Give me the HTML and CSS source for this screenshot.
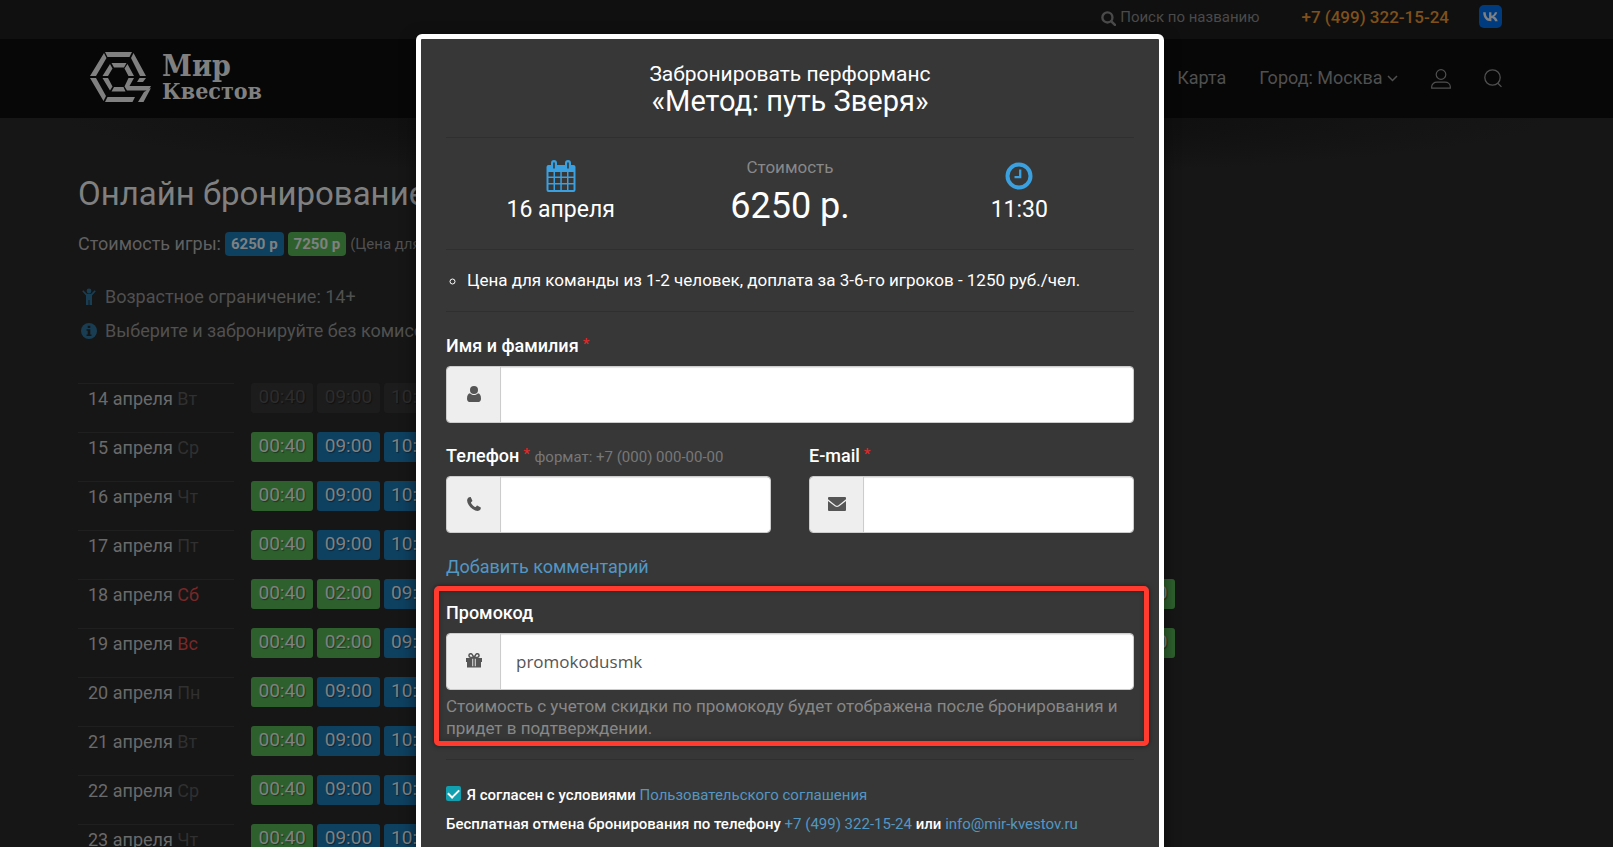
FILE: index.html
```html
<!DOCTYPE html>
<html lang="ru">
<head>
    <meta charset="UTF-8">
    <meta name="viewport" content="width=device-width, initial-scale=1">
    <title>Мир Квестов</title>
    <link rel="stylesheet" href="styles.css">
</head>
<body>
    <div class="page">
        <div class="topbar">
            <div class="container topbar-inner">
                <a class="top-search" href="#">
                    <svg width="15" height="15" viewBox="0 0 14 14"><circle cx="6" cy="6" r="4.7" fill="none" stroke="currentColor" stroke-width="2.2"/><path d="M9.4 9.4L13 13" stroke="currentColor" stroke-width="2.4" stroke-linecap="round"/></svg>
                    Поиск по названию
                </a>
                <a class="top-phone" href="tel:+74993221524">+7 (499) 322-15-24</a>
                <a class="vk" href="#" aria-label="VK">
                    <svg width="23" height="23" viewBox="0 0 23 23"><rect width="23" height="23" rx="5" fill="#003b80"/><path d="M12.2 16.2c-5 0-7.900-3.400-8-9h2.500c.1 4.100 1.900 5.900 3.400 6.200V7.200h2.300v3.600c1.500-.2 3-1.800 3.500-3.600h2.300c-.4 2.200-2 3.800-3.200 4.400 1.200.5 3 2 3.700 4.600h-2.600c-.6-1.700-1.900-3-3.700-3.200v3.200z" fill="#808080"/></svg>
                </a>
            </div>
        </div>
        <header class="header">
            <div class="container header-inner">
                <a class="logo" href="#">
                    <svg width="62" height="50" viewBox="0 0 62 50" fill="#808080">
                        <path d="M15 0h27l-2.500 5H17.500zM14 1l2.500 5L6 24H0zM43.500 1l12.500 23h-6L41 6zM0 26h6l10 18-2.500 5zM15 50l2.500-5H45l-2.500 5zM49.500 26H56l-3 4h-6z"/>
                        <path d="M21.500 11h15L34 15.500H24zM20 12l2.500 4.500-4.500 7.500h-5.500zM37.500 12l6.500 12h-5.500l-4-7.500zM12.500 26H18l4.500 8.500L20 38.500zM21.500 39.500L24 35h9.500l2 4.500zM38.500 26H44l-4.500 8H61l-2.500 4.500H37l-2.500-4zM54 40l7-4-7.500 14H48z"/>
                    </svg>
                    <span class="logo-text"><span class="logo-top">Мир</span><span class="logo-bottom">Квестов</span></span>
                </a>
                <nav class="nav">
                    <a href="#">Карта</a>
                    <a href="#">Город: Москва
                        <svg class="caret" width="11" height="7" viewBox="0 0 11 7"><path d="M1 1l4.500 4.500L10 1" fill="none" stroke="currentColor" stroke-width="1.500"/></svg>
                    </a>
                    <a href="#" aria-label="Профиль">
                        <svg width="20" height="20" viewBox="0 0 20 20" fill="none" stroke="currentColor" stroke-width="1.200"><circle cx="10" cy="5.500" r="4.800"/><path d="M.7 19.200v-1.400c0-2.800 2.400-4.600 5.300-4.600h8c2.900 0 5.300 1.800 5.300 4.600v1.400z"/></svg>
                    </a>
                    <a href="#" aria-label="Поиск">
                        <svg width="18" height="19" viewBox="0 0 18 19" fill="none" stroke="currentColor" stroke-width="1.300"><circle cx="8.500" cy="8.500" r="7.700"/><path d="M13.800 14.200l3.700 3.700"/></svg>
                    </a>
                </nav>
            </div>
        </header>
        <main class="main">
            <div class="container">
                <h1>Онлайн бронирование</h1>
                <p class="prices">Стоимость игры: <span class="badge blue">6250 р</span> <span class="badge green">7250 р</span> <small>(Цена для команды из 1-2 человек)</small></p>
                <ul class="info">
                    <li>
                        <svg width="16" height="18" viewBox="0 0 16 18" fill="#193e54"><circle cx="8" cy="3" r="2.400"/><path d="M2.300 2.200l3.500 3.600h4.400l3.500-3.600 1.100 1.100L11 7.500V17H8.500v-5h-1v5H5V7.500L1.200 3.300z"/></svg>
                        Возрастное ограничение: 14+
                    </li>
                    <li>
                        <svg width="16" height="16" viewBox="0 0 16 16"><circle cx="8" cy="8" r="8" fill="#193e54"/><path d="M6.700 2.700h2.600v2.300H6.700zM5.500 6.300h3.800v5.200h1.200V13h-5v-1.500h1.200V7.800H5.500z" fill="#161616"/></svg>
                        Выберите и забронируйте без комиссии
                    </li>
                </ul>
                <div class="schedule" id="schedule"></div>
            </div>
        </main>
    </div>

    <div class="modal-wrap">
        <div class="modal" role="dialog" aria-labelledby="title">
            <h2 class="title" id="title">Забронировать перформанс <span>«Метод: путь Зверя»</span></h2>
            <div class="summary">
                <div class="sum-col">
                    <svg width="30" height="32" viewBox="0 0 30 32"><path fill="#3aa0df" fill-rule="evenodd" d="M2.500 5H5V3a3 3 0 0 1 6 0v2h8V3a3 3 0 0 1 6 0v2h2.500A2 2 0 0 1 29.500 7v23a2 2 0 0 1-2 2h-25a2 2 0 0 1-2-2V7a2 2 0 0 1 2-2zM7.200 3v5.500h1.600V3a.8.8 0 0 0-1.600 0zM21.200 3v5.500h1.600V3a.8.8 0 0 0-1.600 0zM2.500 12v4.500h5V12zM9 12v4.500h5.300V12zM15.800 12v4.500H21V12zM22.500 12v4.500h5V12zM2.500 18v5h5v-5zM9 18v5h5.300v-5zM15.800 18v5H21v-5zM22.500 18v5h5v-5zM2.500 24.500V30h5v-5.500zM9 24.500V30h5.300v-5.500zM15.800 24.500V30H21v-5.500zM22.500 24.500V30h5v-5.500z"/></svg>
                    <span class="sum-text">16 апреля</span>
                </div>
                <div class="sum-col">
                    <span class="sum-label">Стоимость</span>
                    <span class="sum-price">6250 р.</span>
                </div>
                <div class="sum-col">
                    <svg width="28" height="32" viewBox="0 0 28 32" fill="none" stroke="#3aa0df"><circle cx="14" cy="16" r="11.500" stroke-width="4"/><path d="M15.200 9.500v7.700H9.500" stroke-width="2.300"/></svg>
                    <span class="sum-text">11:30</span>
                </div>
            </div>
            <ul class="note">
                <li>Цена для команды из 1-2 человек, доплата за 3-6-го игроков - 1250 руб./чел.</li>
            </ul>
            <form>
                <div class="field">
                    <label for="name">Имя и фамилия<sup>*</sup></label>
                    <div class="group">
                        <span class="addon"><svg width="14" height="16" viewBox="0 0 14 16" fill="#555"><circle cx="7" cy="4" r="4"/><path d="M3 7.200C4 8.300 5.400 9 7 9s3-.7 4-1.800c2 .4 3 2.200 3 5.600 0 2-1 3.200-2.500 3.200h-9C1 16 0 14.800 0 12.800 0 9.400 1 7.600 3 7.200z"/></svg></span>
                        <input type="text" id="name">
                    </div>
                </div>
                <div class="row">
                    <div class="field">
                        <label for="phone">Телефон<sup>*</sup> <small>формат: +7 (000) 000-00-00</small></label>
                        <div class="group">
                            <span class="addon"><svg width="14" height="14" viewBox="0 0 14 14" fill="#555"><path d="M3.700.1l1.600 3.300c.2.500 0 .8-.4 1.100l-1 .9c.2 1.400 3.200 4.500 4.700 4.700l1-1.100c.3-.4.600-.5 1-.3l3.200 1.700c.2 1.300-.3 2.400-1.600 3.200-1.500.8-4 .4-6.600-1.500C2.500 9.900.2 6.400.1 3.600.100 1.700 1.500-.1 3.700.1z"/></svg></span>
                            <input type="tel" id="phone">
                        </div>
                    </div>
                    <div class="field">
                        <label for="email">E-mail<sup>*</sup></label>
                        <div class="group">
                            <span class="addon"><svg width="18" height="14" viewBox="0 0 18 14" fill="#555"><path d="M1 0h16a1 1 0 0 1 1 1v1.300L10.500 8.200c-1 .7-2 .7-3 0L0 2.300V1a1 1 0 0 1 1-1zM0 4l6.800 5.200c1.500 1.100 2.900 1.100 4.400 0L18 4v9a1 1 0 0 1-1 1H1a1 1 0 0 1-1-1z"/></svg></span>
                            <input type="email" id="email">
                        </div>
                    </div>
                </div>
                <a class="comment" href="#">Добавить комментарий</a>
                <div class="promo">
                    <label for="promo">Промокод</label>
                    <div class="group">
                        <span class="addon"><svg width="16" height="15" viewBox="0 0 16 15" fill="#555"><path fill-rule="evenodd" d="M0 5h4.500A2.500 2.500 0 1 1 7 1.500L8 3l1-1.500A2.500 2.500 0 1 1 11.500 5H16v4h-1v5.500H1V9H0zM4.800 1.500a1.100 1.100 0 0 0 0 2.200h1.700L5.700 2c-.2-.3-.5-.5-.9-.5zM11.200 1.500c-.4 0-.7.2-.9.500l-.8 1.700h1.700a1.100 1.100 0 0 0 0-2.200zM6.300 5.800v7.500h.9V5.800zM8.800 5.800v7.500h.9V5.800z"/></svg></span>
                        <input type="text" id="promo" value="promokodusmk">
                    </div>
                    <p class="help">Стоимость с учетом скидки по промокоду будет отображена после бронирования и придет в подтверждении.</p>
                </div>
                <div class="agree">
                    <p>
                        <input type="checkbox" id="agree" checked>
                        <label for="agree">Я согласен с условиями</label> <a href="#">Пользовательского соглашения</a>
                    </p>
                    <p>Бесплатная отмена бронирования по телефону <a href="tel:+74993221524">+7 (499) 322-15-24</a> или <a href="mailto:info@mir-kvestov.ru">info@mir-kvestov.ru</a></p>
                </div>
            </form>
        </div>
    </div>

    <script src="script.js"></script>
</body>
</html>
```
FILE: styles.css
```css
* {
    box-sizing: border-box;
}

body {
    margin: 0;
    height: 100vh;
    overflow: hidden;
    background: #161616;
    color: #606060;
    font-family: Roboto, "Noto Sans", sans-serif;
    font-size: 17px;
    line-height: 22px;
}

a {
    color: inherit;
    text-decoration: none;
}

p, ul, h1, h2 {
    margin: 0;
    padding: 0;
    font-weight: 400;
}

.container {
    max-width: 1424px;
    margin: 0 auto;
}

.topbar, .header, .main, .modal-wrap {
    padding-right: 33px;
}

/* header */
.topbar {
    background: #101010;
}

.topbar-inner {
    display: flex;
    justify-content: flex-end;
    align-items: center;
    height: 39px;
    padding-bottom: 6px;
}

.top-search {
    color: #4a4a4a;
    font-size: 15px;
    margin-right: 42px;
}

.top-search svg {
    vertical-align: -4px;
}

.top-phone {
    color: #80501a;
    font-weight: 500;
    margin-right: 30px;
}

.vk svg {
    display: block;
}

.header {
    background: #070707;
}

.header-inner {
    display: flex;
    justify-content: space-between;
    align-items: center;
    height: 79px;
    padding: 0 0 2px 12px;
}

.logo {
    display: flex;
    gap: 10px;
    color: #808080;
    font-family: "DejaVu Serif", serif;
    font-stretch: condensed;
    font-weight: 700;
}

.logo-text span {
    display: block;
}

.logo-top {
    font-size: 30px;
    line-height: 27px;
}

.logo-bottom {
    font-size: 23px;
    line-height: 24px;
}

.nav {
    display: flex;
    align-items: center;
    gap: 33px;
    color: #505050;
    font-size: 18px;
}

.nav svg {
    vertical-align: middle;
}

.nav .caret {
    vertical-align: 2px;
}

/* schedule */
.main {
    padding-top: 56px;
    background: radial-gradient(ellipse 46% 60px at 50% 0, #0a0a0a, #161616) no-repeat;
}

h1 {
    font-size: 33px;
    line-height: 40px;
    color: #808080;
}

.prices {
    display: flex;
    gap: 4px;
    margin-top: 18px;
    font-size: 18px;
    line-height: 24px;
}

.prices small {
    font-size: 15px;
    color: #505050;
}

.badge {
    padding: 0 6px;
    border-radius: 4px;
    font-size: 15px;
    font-weight: 700;
    color: #808080;
}

.blue {
    background: #0e4060;
}

.green {
    background: #2e602e;
}

.info {
    list-style: none;
    margin: 24px 0 35px;
    color: #505050;
    font-size: 18px;
}

.info li {
    display: flex;
    align-items: center;
    gap: 8px;
    height: 34px;
    padding-left: 3px;
}

.day {
    display: grid;
    grid-template-columns: 156px minmax(0, 924px);
    gap: 17px;
    height: 49px;
}

.date {
    height: 30px;
    padding: 4px 10px;
    border-top: 1px solid #1f1f1f;
    color: #6a6a6a;
    font-size: 18px;
    white-space: nowrap;
}

.date span {
    color: #303030;
}

.date .weekend {
    color: #782828;
}

.slots {
    display: grid;
    grid-template-columns: repeat(14, minmax(0, 1fr));
    gap: 4px;
}

.slot {
    height: 30px;
    padding: 0 0 2px;
    border: 0;
    border-radius: 3px;
    color: #808080;
    font: inherit;
    font-size: 19px;
    text-align: center;
    text-shadow: 1px 1px 1px rgba(0, 0, 0, .4);
}

.slot:disabled {
    background: #1c1c1c;
    color: #2c2c2c;
}

/* booking window */
.modal-wrap {
    position: absolute;
    top: 34px;
    left: 0;
    right: 0;
}

.modal {
    max-width: 748px;
    margin: 0 auto;
    padding: 21px 25px 30px;
    border: 5px solid #fff;
    border-radius: 6px;
    background: #373737;
    box-shadow: 0 5px 15px rgba(0, 0, 0, .5);
    color: #fff;
}

.modal a {
    color: #5297c4;
}

.title {
    padding-bottom: 23px;
    border-bottom: 1px solid #2f2f2f;
    font-size: 21px;
    line-height: 28px;
    text-align: center;
}

.title span {
    display: block;
    font-size: 29px;
    line-height: 26px;
}

.summary {
    display: grid;
    grid-template-columns: repeat(3, 1fr);
    height: 112px;
    padding-top: 22px;
    border-bottom: 1px solid #2f2f2f;
}

.sum-col {
    display: flex;
    flex-direction: column;
    align-items: center;
}

.sum-text {
    font-size: 23px;
    line-height: 36px;
}

.sum-label {
    color: #888;
    line-height: 14px;
}

.sum-price {
    font-size: 36px;
    line-height: 64px;
}

.note {
    list-style: circle;
    padding: 19px 0 20px 21px;
    border-bottom: 1px solid #2f2f2f;
}

.field {
    margin-top: 22px;
}

.row .field {
    margin-top: 21px;
}

.modal label {
    display: block;
    height: 24px;
    margin-bottom: 8px;
    font-size: 18px;
    font-weight: 500;
    line-height: 24px;
}

sup {
    margin-left: 4px;
    color: #d92d2d;
    font-size: 15px;
    line-height: 0;
    vertical-align: 3px;
}

label small {
    color: #777;
    font-size: 15px;
    font-weight: 400;
}

.row {
    display: grid;
    grid-template-columns: 1fr 1fr;
    gap: 38px;
}

.group {
    display: flex;
    height: 57px;
    border: 1px solid #ccc;
    border-radius: 4px;
    overflow: hidden;
}

.addon {
    display: flex;
    align-items: center;
    justify-content: center;
    width: 54px;
    padding-bottom: 2px;
    background: #eee;
    border-right: 1px solid #ccc;
}

.group input {
    flex: 1;
    min-width: 0;
    padding: 0 15px;
    border: 0;
    background: #fff;
    box-shadow: inset 0 1px 1px rgba(0, 0, 0, .1);
    color: #555;
    font-family: "Open Sans", sans-serif;
    font-size: 17px;
}

.comment {
    display: inline-block;
    margin-top: 23px;
    font-size: 18px;
}

/* red frame reaches past the form column */
.promo {
    margin: 8px -15px 13px -12px;
    padding: 10px 10px 2px 7px;
    border: 5px solid #ff3a2f;
    border-radius: 5px;
    box-shadow: 0 0 5px rgba(0, 0, 0, .5), inset 0 0 5px rgba(0, 0, 0, .3);
}

.help {
    margin-top: 5px;
    color: #888;
}

.agree {
    padding-top: 21px;
    border-top: 1px solid #2f2f2f;
    font-size: 15px;
}

.agree p {
    font-weight: 500;
    line-height: 29px;
}

.agree a {
    font-weight: 400;
}

.agree label {
    display: inline;
    font-size: 15px;
}

.agree input {
    appearance: none;
    width: 15px;
    height: 15px;
    margin: 0 2px 0 0;
    border-radius: 2px;
    background: #129fb0;
    vertical-align: -1px;
}

.agree input:checked::before {
    content: "";
    display: block;
    width: 5px;
    height: 9px;
    margin: 1px auto 0;
    border: solid #fff;
    border-width: 0 2px 2px 0;
    transform: rotate(45deg);
}
```
FILE: script.js
```js
const days = [
    ['14 апреля', 'Вт'],
    ['15 апреля', 'Ср'],
    ['16 апреля', 'Чт'],
    ['17 апреля', 'Пт'],
    ['18 апреля', 'Сб'],
    ['19 апреля', 'Вс'],
    ['20 апреля', 'Пн'],
    ['21 апреля', 'Вт'],
    ['22 апреля', 'Ср'],
    ['23 апреля', 'Чт']
];

const weekdayTimes = ['00:40', '09:00', '10:15'];
const weekendTimes = ['00:40', '02:00', '09:00', '10:15', '11:30', '12:45', '14:00', '15:15', '16:30', '17:45', '19:00', '20:15', '21:30', '23:00'];

let html = '';
days.forEach(function (day, i) {
    const weekend = day[1] == 'Сб' || day[1] == 'Вс';
    const times = weekend ? weekendTimes : weekdayTimes;

    html += '<div class="day"><div class="date">' + day[0] + ' <span class="' + (weekend ? 'weekend' : '') + '">' + day[1] + '</span></div><div class="slots">';
    times.forEach(function (time, n) {
        const green = n == 0 || (weekend && (n == 1 || n > 3));
        html += '<button class="slot ' + (green ? 'green' : 'blue') + '"' + (i == 0 ? ' disabled' : '') + '>' + time + '</button>';
    });
    html += '</div></div>';
});
document.getElementById('schedule').innerHTML = html;
```
